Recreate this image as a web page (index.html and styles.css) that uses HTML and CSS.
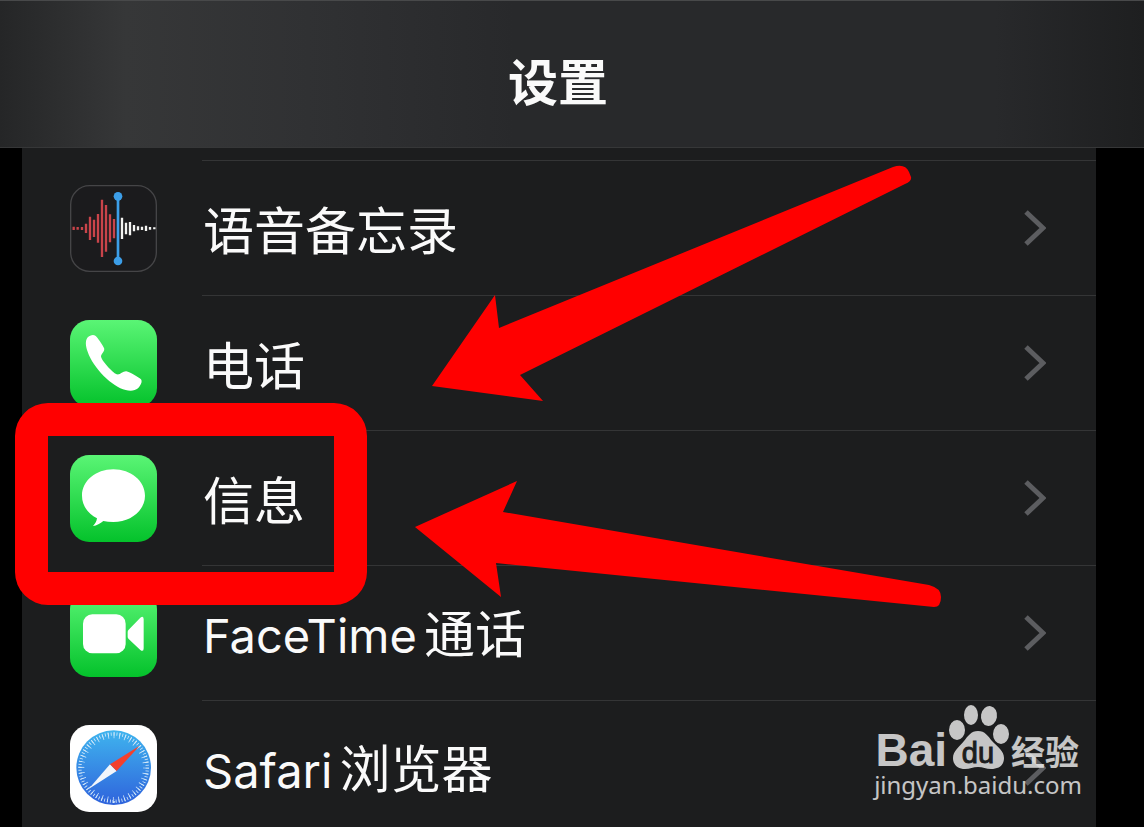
FILE: index.html
```html
<!DOCTYPE html>
<html lang="zh-CN">
<head>
    <meta charset="UTF-8">
    <meta name="viewport" content="width=device-width, initial-scale=1">
    <title>设置</title>
    <link rel="stylesheet" href="styles.css">
</head>
<body>
<header class="navbar">
    <h1>设置</h1>
</header>

<main class="panel">
    <ul class="list">
        <li>
            <a class="row" href="#voice-memos">
                <svg class="icon" viewBox="30 30 261 261" aria-hidden="true">
                    <rect x="32" y="32" width="257" height="257" rx="57" fill="#1b1b1d" stroke="#454547" stroke-width="4"/>
                    <g fill="none" stroke-width="7">
                        <path stroke="#c9444a" d="M41 155v10M53 156v8M66 156v9M78 146v28M90 125v70M102 134v52M114 117v86M126 74v172M138 90v140M150 118v84M162 132v58"/>
                        <path stroke="#f4f4f2" d="M186 128v64M198 143v35M210 141v40M222 150v19M234 154v12M246 155v10M258 152v16M270 156v8M283 157v6"/>
                        <path stroke="#3c9ee8" stroke-width="8" d="M174 64v194"/>
                    </g>
                    <circle cx="174" cy="64" r="13" fill="#3c9ee8"/>
                    <circle cx="174" cy="258" r="13" fill="#3c9ee8"/>
                </svg>
                <span class="cell"><span class="label">语音备忘录</span>
                    <svg class="chevron" viewBox="0 0 22 36" aria-hidden="true"><path d="M2 2l17 16L2 34"/></svg>
                </span>
            </a>
        </li>
        <li>
            <a class="row" href="#phone">
                <svg class="icon" viewBox="30 30 261 261" aria-hidden="true">
                    <defs>
                        <linearGradient id="green" x1="0" y1="0" x2="0" y2="1">
                            <stop offset="0" stop-color="#5af575"/>
                            <stop offset="1" stop-color="#04c22b"/>
                        </linearGradient>
                    </defs>
                    <rect x="30" y="30" width="261" height="261" rx="58" fill="url(#green)"/>
                    <path fill="#fff" d="M82 83C90 75 100 73 106 77C112 81 128 105 132 114C136 123 124 131 123 139C123 150 157 188 170 193C180 196 188 183 199 184C210 187 235 201 243 208C248 215 242 227 234 235C225 243 210 244 197 240C157 230 100 175 83 125C76 106 76 92 82 83Z"/>
                </svg>
                <span class="cell"><span class="label">电话</span>
                    <svg class="chevron" viewBox="0 0 22 36" aria-hidden="true"><path d="M2 2l17 16L2 34"/></svg>
                </span>
            </a>
        </li>
        <li>
            <a class="row" href="#messages">
                <svg class="icon" viewBox="30 30 261 261" aria-hidden="true">
                    <rect x="30" y="30" width="261" height="261" rx="58" fill="url(#green)"/>
                    <path fill="#fff" d="M160 73C213 73 255 108 255 152C255 196 213 231 160 231C149 231 139 230 130 228C121 236 110 242 99 243C105 237 110 229 111 220C83 206 66 181 66 152C66 108 107 73 160 73Z"/>
                </svg>
                <span class="cell"><span class="label">信息</span>
                    <svg class="chevron" viewBox="0 0 22 36" aria-hidden="true"><path d="M2 2l17 16L2 34"/></svg>
                </span>
            </a>
        </li>
        <li>
            <a class="row" href="#facetime">
                <svg class="icon" viewBox="30 30 261 261" aria-hidden="true">
                    <rect x="30" y="30" width="261" height="261" rx="58" fill="url(#green)"/>
                    <rect x="69" y="103" width="128" height="117" rx="28" fill="#fff"/>
                    <path fill="#fff" d="M206 149L241 113Q251 106 251 118V205Q251 217 241 210L206 177Q203 174 203 170V156Q203 152 206 149Z"/>
                </svg>
                <span class="cell"><span class="label"><span class="latin">FaceTime</span>通话</span>
                    <svg class="chevron" viewBox="0 0 22 36" aria-hidden="true"><path d="M2 2l17 16L2 34"/></svg>
                </span>
            </a>
        </li>
        <li>
            <a class="row" href="#safari">
                <svg class="icon" viewBox="30 30 261 261" aria-hidden="true">
                    <defs>
                        <linearGradient id="blue" x1="0" y1="0" x2="0" y2="1">
                            <stop offset="0" stop-color="#3fb4ee"/>
                            <stop offset="1" stop-color="#2f63dc"/>
                        </linearGradient>
                    </defs>
                    <rect x="30" y="30" width="261" height="261" rx="58" fill="#fff"/>
                    <circle cx="161" cy="158" r="112" fill="url(#blue)"/>
                    <g fill="none" stroke="#d5eafa">
                        <circle cx="161" cy="158" r="101" stroke-width="10" pathLength="360" stroke-dasharray="1.4 3.6"/>
                        <circle cx="161" cy="158" r="97" stroke-width="18" pathLength="360" stroke-dasharray="1.4 8.6"/>
                    </g>
                    <path fill="#f2f6fb" d="M86 222L150 148L170 168Z"/>
                    <path fill="#f5402d" d="M239 92L150 148L170 168Z"/>
                </svg>
                <span class="cell"><span class="label"><span class="latin">Safari</span>浏览器</span>
                    <svg class="chevron" viewBox="0 0 22 36" aria-hidden="true"><path d="M2 2l17 16L2 34"/></svg>
                </span>
            </a>
        </li>
    </ul>
</main>

<!-- red marks drawn over the list -->
<svg class="marks" width="960" height="620" viewBox="0 0 960 620" aria-hidden="true">
    <path d="M432 386L495 295L499 328L893 167Q905 163 909 172L911 177Q912 181 905 184L520 375L543 401Z"/>
    <path d="M415 527L517 481L503 512L929 585Q941 588 941 597Q941 607 934 607L496 563L501 597Z"/>
    <path fill-rule="evenodd" d="M48 403H334A33 33 0 0 1 367 436V572A33 33 0 0 1 334 605H48A33 33 0 0 1 15 572V436A33 33 0 0 1 48 403ZM48 436V572H334V436Z"/>
</svg>

<div class="watermark">
    <div class="brand">
        <span class="bai">Bai</span>
        <svg class="paw" viewBox="0 0 60 66" role="img" aria-label="du">
            <ellipse cx="8" cy="26" rx="8" ry="10"/>
            <ellipse cx="22" cy="11" rx="7" ry="10"/>
            <ellipse cx="40" cy="12" rx="8" ry="10" transform="rotate(10 40 12)"/>
            <ellipse cx="52" cy="30" rx="8" ry="10"/>
            <path d="M29 27C36 27 39 32 43 37C49 43 55 47 55 54C55 62 49 65 42 65C37 65 34 63 29 63C24 63 21 65 16 65C9 65 4 61 4 54C4 47 10 43 15 37C19 32 22 27 29 27Z"/>
            <text x="29" y="59">du</text>
        </svg>
        <span class="jingyan">经验</span>
    </div>
    <span class="url">jingyan.baidu.com</span>
</div>
</body>
</html>
```

FILE: styles.css
```css
:root {
    --panel: #1c1d1e;
    --line: #343536;
    --row: 135px;
}

* {
    box-sizing: border-box;
}

body {
    position: relative;
    height: 100vh;
    margin: 0;
    overflow: hidden;
    display: flex;
    flex-direction: column;
    background: #000;
    color: #fafafa;
    font-family: "Noto Sans CJK SC", sans-serif;
}

/* title bar */
.navbar {
    flex: none;
    height: 148px;
    padding: 10px 28px 0 0;
    display: flex;
    align-items: center;
    justify-content: center;
    border-top: 1px solid #48494a;
    border-bottom: 1px solid #363738;
    background: linear-gradient(to right, #252627, #363738 11%, #303133 27%, #28292b 45%, #28292b 87%, #1e1f20);
}

.navbar h1 {
    margin: 0;
    font-size: 50px;
    line-height: 60px;
    font-weight: 700;
}

/* settings list */
.panel {
    flex: none;
    margin: 0 48px 0 22px;
    padding-top: 12px;
    background: var(--panel);
}

.list {
    margin: 0;
    padding: 0;
    list-style: none;
}

.row {
    height: var(--row);
    padding-left: 48px;
    display: flex;
    align-items: center;
    gap: 45px;
    color: inherit;
    text-decoration: none;
}

.icon {
    flex: none;
    width: 87px;
    height: 87px;
    margin-top: 1px;
}

.cell {
    flex: 1;
    height: 100%;
    padding: 0 50px 0 1px;
    display: flex;
    align-items: center;
    justify-content: space-between;
    border-top: 1px solid var(--line);
}

.label {
    font-size: 51px;
    line-height: 60px;
    white-space: nowrap;
}

.latin {
    margin-right: 7px;
    font-family: Inter, sans-serif;
    font-size: 47px;
}

.chevron {
    width: 22px;
    height: 36px;
    fill: none;
    stroke: #5c5d60;
    stroke-width: 5;
}

/* arrows and frame */
.marks {
    position: absolute;
    top: 0;
    left: 0;
    fill: #f00;
}

/* watermark */
.watermark {
    position: absolute;
    right: 62px;
    bottom: 27px;
    display: flex;
    flex-direction: column;
    align-items: flex-end;
    color: #fff;
    opacity: 0.75;
}

.brand {
    display: flex;
    align-items: flex-end;
    gap: 2px;
    padding-right: 3px;
}

.bai {
    font: bold 46px/40px "Liberation Sans", sans-serif;
}

.paw {
    width: 60px;
    height: 66px;
    fill: #fff;
}

.paw text {
    fill: var(--panel);
    stroke: var(--panel);
    font: 29px "Liberation Sans", sans-serif;
    text-anchor: middle;
}

.jingyan {
    font-size: 34px;
    line-height: 38px;
    font-weight: 700;
}

.url {
    font: 24px/30px "Noto Sans", sans-serif;
}
```
